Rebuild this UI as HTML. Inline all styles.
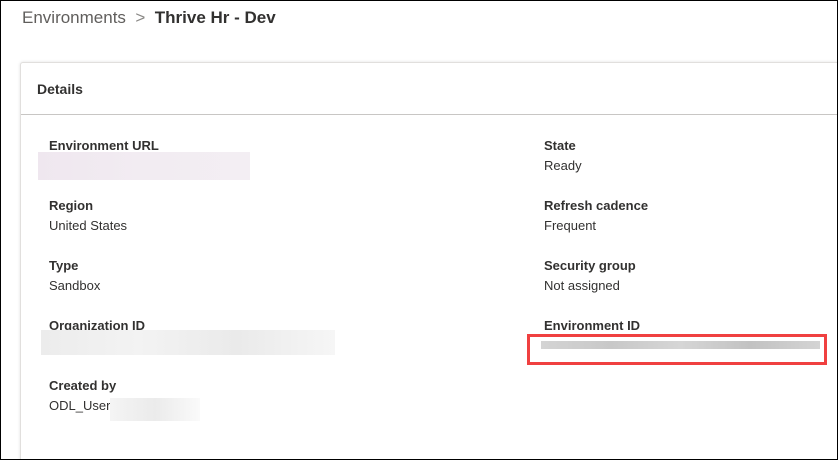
<!DOCTYPE html>
<html style="margin:0;width:838px;height:460px;overflow:hidden"><head><style>
body{margin:0;width:838px;height:460px;overflow:hidden;background:#fff;font-family:"Liberation Sans",sans-serif;color:#323130;position:relative}
.frame{position:absolute;left:0;top:0;width:836px;height:458px;border:1px solid #000;z-index:5}
.bc{position:absolute;left:22px;top:8px;font-size:17px;color:#605e5c;white-space:nowrap}
.bc b{color:#323130;font-weight:bold;}
.card{position:absolute;left:20px;top:62px;width:817px;height:397px;border-left:1px solid #e1dfdd;border-top:1px solid #e1dfdd;border-radius:3px 0 0 0;box-shadow:0 0 3px rgba(0,0,0,.12);background:#fff}
.hdr{position:absolute;left:0;top:0;right:0;height:51px;border-bottom:1px solid #c8c6c4}
.hdr span{position:absolute;left:16px;top:18px;font-size:14px;font-weight:bold}
.l{position:absolute;font-size:13px;font-weight:bold;color:#323130}
.v{position:absolute;font-size:13px;color:#323130}
.blob{position:absolute}
</style></head><body>
<div class="card"><div class="hdr"><span>Details</span></div></div>
<div class="frame"></div>
<div class="bc">Environments &nbsp;<span style="color:#8a8886">&gt;</span>&nbsp; <b>Thrive Hr - Dev</b></div>
<div class="l" style="left:49px;top:138px">Environment URL</div>
<div class="blob" style="left:38px;top:152px;width:212px;height:28px;background:linear-gradient(90deg,#efe7ef,#f2ecf2,#f3eef3)"></div>
<div class="l" style="left:49px;top:198px">Region</div>
<div class="v" style="left:49px;top:218px">United States</div>
<div class="l" style="left:49px;top:258px">Type</div>
<div class="v" style="left:49px;top:278px">Sandbox</div>
<div class="l" style="left:49px;top:318px">Organization ID</div>
<div class="blob" style="left:41px;top:330px;width:294px;height:25px;background:linear-gradient(90deg,#ececec,#f3f3f3,#eaeaea,#f6f6f6)"></div>
<div class="l" style="left:49px;top:378px">Created by</div>
<div class="v" style="left:49px;top:398px">ODL_User</div>
<div class="blob" style="left:110px;top:398px;width:90px;height:23px;background:linear-gradient(90deg,#f4f4f4,#ebebeb,#fafafa)"></div>
<div class="l" style="left:544px;top:138px">State</div>
<div class="v" style="left:544px;top:158px">Ready</div>
<div class="l" style="left:544px;top:198px">Refresh cadence</div>
<div class="v" style="left:544px;top:218px">Frequent</div>
<div class="l" style="left:544px;top:258px">Security group</div>
<div class="v" style="left:544px;top:278px">Not assigned</div>
<div class="l" style="left:544px;top:318px">Environment ID</div>
<div class="blob" style="left:541px;top:341px;width:279px;height:8px;background:linear-gradient(90deg,#d4d4d4,#c8c8c8,#d6d6d6,#c2c2c2,#d4d4d4)"></div>
<div class="blob" style="left:527px;top:334px;width:294px;height:25px;border:3px solid #f04040"></div>
</body></html>
